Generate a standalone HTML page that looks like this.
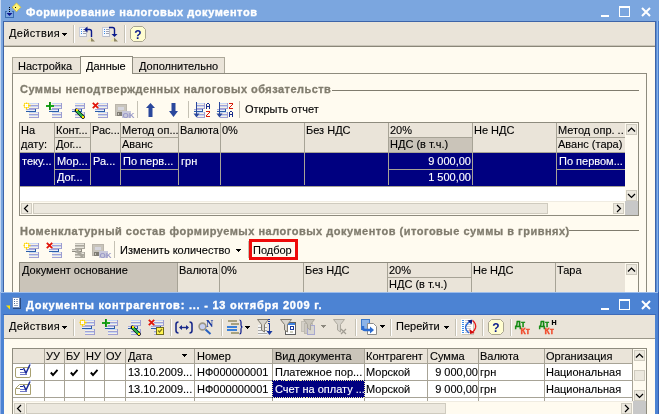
<!DOCTYPE html>
<html><head><meta charset="utf-8">
<style>
*{box-sizing:border-box}
html,body{margin:0;padding:0}
body{width:659px;height:414px;overflow:hidden;position:relative;background:#FFFBF0;font:11px "Liberation Sans",sans-serif;color:#000}
.a{position:absolute}
.t{position:absolute;white-space:nowrap;line-height:13px;will-change:transform;-webkit-text-stroke:0.12px}
svg{position:absolute;shape-rendering:crispEdges;overflow:visible;will-change:transform}
</style></head><body>

<div class="a" style="left:0px;top:0px;width:659px;height:292px;background:#7BA6DF"></div>
<div class="a" style="left:0px;top:0px;width:1px;height:292px;background:#C6D8F2"></div>
<div class="t" style="left:26px;top:5px;color:#fff;font-weight:bold;font-size:11px;line-height:14px;letter-spacing:0.53px;-webkit-text-stroke:0.35px #fff">Формирование налоговых документов</div>
<div class="a" style="left:601px;top:15px;width:8px;height:2px;background:#fff"></div>
<div class="a" style="left:619px;top:6px;width:11px;height:11px;border:1px solid #fff;border-top-width:2px"></div>
<svg style="left:641px;top:7px" width="10" height="10"><path d="M1 1L9 9M9 1L1 9" stroke="#fff" stroke-width="2" shape-rendering="geometricPrecision"/></svg>
<svg style="left:0px;top:0px" width="24" height="22">
<path d="M5.5 11V17.5H13.5V11M5.5 11.5H7M12 11.5H13.5" stroke="#3A6CB0" stroke-width="1" fill="none"/>
<path d="M6.5 13h6l-3 3z" fill="#0A1490" shape-rendering="geometricPrecision"/>
<rect x="9" y="7" width="1" height="1" fill="#000"/><rect x="9" y="9" width="1" height="1" fill="#000"/><rect x="9" y="11" width="1" height="1" fill="#000"/>
<rect x="12" y="7" width="1" height="1" fill="#000"/>
<path d="M16.5 3L20.8 7.3L16.5 11.6L12.2 7.3Z" fill="#FFF47A" stroke="#E0C020" stroke-width="0.8" shape-rendering="geometricPrecision"/>
<rect x="15" y="7" width="1" height="1" fill="#000"/>
</svg>
<div class="a" style="left:3px;top:21px;width:653px;height:271px;background:#3E64A8"></div>
<div class="a" style="left:656px;top:21px;width:1px;height:271px;background:#5C8ED6"></div>
<div class="a" style="left:657px;top:21px;width:1px;height:271px;background:#86B2EA"></div>
<div class="a" style="left:658px;top:21px;width:1px;height:271px;background:#4A7CC8"></div>
<div class="a" style="left:4px;top:22px;width:651px;height:24px;background:#EAE4D9"></div>
<div class="a" style="left:4px;top:45px;width:651px;height:1px;background:#C9C4B8"></div>
<div class="a" style="left:4px;top:46px;width:651px;height:1px;background:#8A8678"></div>
<div class="a" style="left:4px;top:47px;width:651px;height:245px;background:#FFFBF0"></div>
<div class="t" style="left:9px;top:27px;letter-spacing:0.35px">Действия</div>
<svg style="left:62px;top:33px" width="5" height="3"><path d="M0 0h5v1h-1v1h-1v1h-1v-1h-1v-1h-1z" fill="#000"/></svg>
<div class="a" style="left:73px;top:25px;width:1px;height:18px;background:#C5C1B4"></div>
<div class="a" style="left:74px;top:25px;width:1px;height:18px;background:#FFFFFF"></div>
<svg style="left:79px;top:26px" width="17" height="16" viewBox="0 0 17 16"><g transform="translate(0 1)"><rect x="0" y="0" width="8" height="10" fill="#F6F8FC"/><rect x="0" y="0" width="8" height="1" fill="#C8CCD8"/><rect x="0" y="9" width="8" height="1" fill="#B8BCC8"/><rect x="0" y="0" width="1" height="10" fill="#C8CCD8"/><rect x="7" y="0" width="1" height="10" fill="#B8BCC8"/><rect x="2" y="2" width="1" height="1" fill="#3C8CE8"/><rect x="2" y="4" width="1" height="1" fill="#3C8CE8"/><rect x="2" y="6" width="1" height="1" fill="#3C8CE8"/><rect x="4" y="2" width="3" height="1" fill="#9CA0B0"/><rect x="4" y="4" width="3" height="1" fill="#9CA0B0"/><rect x="4" y="6" width="3" height="1" fill="#9CA0B0"/></g><path d="M12.5 11V5.5Q12.5 3.5 10.5 3.5H7" stroke="#0A1A8C" stroke-width="1.4" fill="none" shape-rendering="geometricPrecision"/><path d="M5 3.5L8.5 0.5V6.5Z" fill="#0A1A8C" shape-rendering="geometricPrecision"/><path d="M8 15.5L12 11.5L12 15.5Z" fill="#ECE6B8" shape-rendering="geometricPrecision"/><path d="M12 11.5L16 15.5L12 15.5Z" fill="#8E8662" shape-rendering="geometricPrecision"/></svg>
<svg style="left:102px;top:26px" width="17" height="16" viewBox="0 0 17 16"><g transform="translate(0 1)"><rect x="0" y="0" width="8" height="10" fill="#F6F8FC"/><rect x="0" y="0" width="8" height="1" fill="#C8CCD8"/><rect x="0" y="9" width="8" height="1" fill="#B8BCC8"/><rect x="0" y="0" width="1" height="10" fill="#C8CCD8"/><rect x="7" y="0" width="1" height="10" fill="#B8BCC8"/><rect x="2" y="2" width="1" height="1" fill="#3C8CE8"/><rect x="2" y="4" width="1" height="1" fill="#3C8CE8"/><rect x="2" y="6" width="1" height="1" fill="#3C8CE8"/><rect x="4" y="2" width="3" height="1" fill="#9CA0B0"/><rect x="4" y="4" width="3" height="1" fill="#9CA0B0"/><rect x="4" y="6" width="3" height="1" fill="#9CA0B0"/></g><path d="M7 1.5H10.5Q12.5 1.5 12.5 3.5V8" stroke="#0A1A8C" stroke-width="1.4" fill="none" shape-rendering="geometricPrecision"/><path d="M9.5 8H15.5L12.5 11Z" fill="#0A1A8C" shape-rendering="geometricPrecision"/><path d="M8 15.5L12 11.5L12 15.5Z" fill="#ECE6B8" shape-rendering="geometricPrecision"/><path d="M12 11.5L16 15.5L12 15.5Z" fill="#8E8662" shape-rendering="geometricPrecision"/></svg>
<div class="a" style="left:124px;top:25px;width:1px;height:18px;background:#C5C1B4"></div>
<div class="a" style="left:125px;top:25px;width:1px;height:18px;background:#FFFFFF"></div>
<svg style="left:130px;top:26px" width="16" height="16" viewBox="0 0 16 16"><path d="M3.5 0.5H12.5L15.5 3.5V12.5L12.5 15.5H3.5L0.5 12.5V3.5Z" fill="#FFFDD0" stroke="#A9A590" shape-rendering="geometricPrecision"/><text x="8" y="12.6" text-anchor="middle" font-family="Liberation Sans" font-weight="bold" font-size="12" fill="#0A1A8C">?</text></svg>
<div class="a" style="left:12px;top:57px;width:69px;height:17px;background:#EAE4D9;border:1px solid #ACA899;border-bottom:none"></div>
<div class="t" style="left:18px;top:60px;">Настройка</div>
<div class="a" style="left:132px;top:57px;width:93px;height:17px;background:#EAE4D9;border:1px solid #ACA899;border-bottom:none"></div>
<div class="t" style="left:139px;top:60px;">Дополнительно</div>
<div class="a" style="left:12px;top:73px;width:635px;height:240px;border:1px solid #8E8B7E"></div>
<div class="a" style="left:80px;top:56px;width:53px;height:18px;background:#FFFBF0;border:1px solid #8E8B7E;border-bottom:none"></div>
<div class="t" style="left:86px;top:60px;">Данные</div>
<div class="t" style="left:20px;top:83px;font-weight:bold;color:#807C6E;letter-spacing:0.46px;-webkit-text-stroke:0.3px">Суммы неподтвержденных налоговых обязательств</div>
<div class="a" style="left:332px;top:90px;width:307px;height:1px;background:#807C6E"></div>
<svg style="left:23px;top:102px" width="16" height="16" viewBox="0 0 16 16"><rect x="6" y="1" width="10" height="1" fill="#C6D6F6"/><rect x="6" y="2" width="10" height="1" fill="#F6F0E4"/><rect x="6" y="3" width="10" height="1" fill="#A2A2D4"/><rect x="15" y="1" width="1" height="3" fill="#9C9CD0"/><rect x="6" y="4" width="10" height="1" fill="#C6D6F6"/><rect x="6" y="5" width="10" height="1" fill="#F6F0E4"/><rect x="6" y="6" width="10" height="1" fill="#A2A2D4"/><rect x="15" y="4" width="1" height="3" fill="#9C9CD0"/><rect x="3" y="7" width="10" height="1" fill="#A8A8DC"/><rect x="3" y="8" width="10" height="1" fill="#E8ECF8"/><rect x="3" y="9" width="10" height="1" fill="#2A5EA8"/><rect x="12" y="7" width="1" height="3" fill="#2A5EA8"/><rect x="6" y="10" width="10" height="1" fill="#C6D6F6"/><rect x="6" y="11" width="10" height="1" fill="#F6F0E4"/><rect x="6" y="12" width="10" height="1" fill="#A2A2D4"/><rect x="15" y="10" width="1" height="3" fill="#9C9CD0"/><rect x="6" y="13" width="10" height="1" fill="#C6D6F6"/><rect x="6" y="14" width="10" height="1" fill="#F6F0E4"/><rect x="6" y="15" width="10" height="1" fill="#A2A2D4"/><rect x="15" y="13" width="1" height="3" fill="#9C9CD0"/><path d="M3.5 0.5v7M0.5 3.5h7M1.3 1.3l4.4 4.4M5.7 1.3l-4.4 4.4" stroke="#FFD400" stroke-width="1.3" shape-rendering="geometricPrecision"/><rect x="2" y="2" width="3" height="3" fill="#FFFFFF"/><rect x="3" y="3" width="1" height="1" fill="#FFF8C0"/></svg>
<svg style="left:46px;top:102px" width="16" height="16" viewBox="0 0 16 16"><rect x="6" y="1" width="10" height="1" fill="#C6D6F6"/><rect x="6" y="2" width="10" height="1" fill="#F6F0E4"/><rect x="6" y="3" width="10" height="1" fill="#A2A2D4"/><rect x="15" y="1" width="1" height="3" fill="#9C9CD0"/><rect x="6" y="4" width="10" height="1" fill="#C6D6F6"/><rect x="6" y="5" width="10" height="1" fill="#F6F0E4"/><rect x="6" y="6" width="10" height="1" fill="#A2A2D4"/><rect x="15" y="4" width="1" height="3" fill="#9C9CD0"/><rect x="3" y="7" width="10" height="1" fill="#A8A8DC"/><rect x="3" y="8" width="10" height="1" fill="#E8ECF8"/><rect x="3" y="9" width="10" height="1" fill="#2A5EA8"/><rect x="12" y="7" width="1" height="3" fill="#2A5EA8"/><rect x="6" y="10" width="10" height="1" fill="#C6D6F6"/><rect x="6" y="11" width="10" height="1" fill="#F6F0E4"/><rect x="6" y="12" width="10" height="1" fill="#A2A2D4"/><rect x="15" y="10" width="1" height="3" fill="#9C9CD0"/><rect x="6" y="13" width="10" height="1" fill="#C6D6F6"/><rect x="6" y="14" width="10" height="1" fill="#F6F0E4"/><rect x="6" y="15" width="10" height="1" fill="#A2A2D4"/><rect x="15" y="13" width="1" height="3" fill="#9C9CD0"/><rect x="3" y="0" width="2" height="8" fill="#1CA51C"/><rect x="0" y="3" width="8" height="2" fill="#1CA51C"/><rect x="3" y="0" width="1" height="8" fill="#0E8A0E"/></svg>
<svg style="left:69px;top:102px" width="16" height="16" viewBox="0 0 16 16"><rect x="6" y="1" width="10" height="1" fill="#C6D6F6"/><rect x="6" y="2" width="10" height="1" fill="#F6F0E4"/><rect x="6" y="3" width="10" height="1" fill="#A2A2D4"/><rect x="15" y="1" width="1" height="3" fill="#9C9CD0"/><rect x="6" y="4" width="10" height="1" fill="#C6D6F6"/><rect x="6" y="5" width="10" height="1" fill="#F6F0E4"/><rect x="6" y="6" width="10" height="1" fill="#A2A2D4"/><rect x="15" y="4" width="1" height="3" fill="#9C9CD0"/><rect x="3" y="7" width="10" height="1" fill="#A8A8DC"/><rect x="3" y="8" width="10" height="1" fill="#E8ECF8"/><rect x="3" y="9" width="10" height="1" fill="#2A5EA8"/><rect x="12" y="7" width="1" height="3" fill="#2A5EA8"/><rect x="6" y="10" width="10" height="1" fill="#C6D6F6"/><rect x="6" y="11" width="10" height="1" fill="#F6F0E4"/><rect x="6" y="12" width="10" height="1" fill="#A2A2D4"/><rect x="15" y="10" width="1" height="3" fill="#9C9CD0"/><rect x="6" y="13" width="10" height="1" fill="#C6D6F6"/><rect x="6" y="14" width="10" height="1" fill="#F6F0E4"/><rect x="6" y="15" width="10" height="1" fill="#A2A2D4"/><rect x="15" y="13" width="1" height="3" fill="#9C9CD0"/><path d="M7.5 8.5L14 15" stroke="#000" stroke-width="3.6" stroke-linecap="round" shape-rendering="geometricPrecision"/><path d="M7.5 8.5L14 15" stroke="#2DB84A" stroke-width="2.4" shape-rendering="geometricPrecision"/><rect x="6.5" y="6.5" width="2" height="2" fill="#FFE400"/><rect x="13" y="14" width="2" height="2" fill="#FFE400"/></svg>
<svg style="left:92px;top:102px" width="16" height="16" viewBox="0 0 16 16"><rect x="6" y="1" width="10" height="1" fill="#C6D6F6"/><rect x="6" y="2" width="10" height="1" fill="#F6F0E4"/><rect x="6" y="3" width="10" height="1" fill="#A2A2D4"/><rect x="15" y="1" width="1" height="3" fill="#9C9CD0"/><rect x="6" y="4" width="10" height="1" fill="#C6D6F6"/><rect x="6" y="5" width="10" height="1" fill="#F6F0E4"/><rect x="6" y="6" width="10" height="1" fill="#A2A2D4"/><rect x="15" y="4" width="1" height="3" fill="#9C9CD0"/><rect x="3" y="7" width="10" height="1" fill="#A8A8DC"/><rect x="3" y="8" width="10" height="1" fill="#E8ECF8"/><rect x="3" y="9" width="10" height="1" fill="#2A5EA8"/><rect x="12" y="7" width="1" height="3" fill="#2A5EA8"/><rect x="6" y="10" width="10" height="1" fill="#C6D6F6"/><rect x="6" y="11" width="10" height="1" fill="#F6F0E4"/><rect x="6" y="12" width="10" height="1" fill="#A2A2D4"/><rect x="15" y="10" width="1" height="3" fill="#9C9CD0"/><rect x="6" y="13" width="10" height="1" fill="#C6D6F6"/><rect x="6" y="14" width="10" height="1" fill="#F6F0E4"/><rect x="6" y="15" width="10" height="1" fill="#A2A2D4"/><rect x="15" y="13" width="1" height="3" fill="#9C9CD0"/><path d="M0.8 0.8L6.2 6.2M6.2 0.8L0.8 6.2" stroke="#E0140A" stroke-width="1.8" shape-rendering="geometricPrecision"/></svg>
<svg style="left:115px;top:102px" width="16" height="16" viewBox="0 0 16 16"><rect x="0" y="2" width="12" height="12" fill="#BAB5AB"/><rect x="1" y="3" width="10" height="10" fill="#C9C5BC"/><rect x="3" y="5" width="6" height="3" fill="#D6D6DE"/><rect x="2" y="10" width="5" height="4" fill="#807D74"/><rect x="3" y="11" width="1" height="2" fill="#C9C5BC"/><rect x="7" y="9" width="9" height="7" fill="#C8C8DA"/><text x="7.5" y="15.5" font-family="Liberation Sans" font-size="8" fill="#9A9AC8" font-weight="bold">OK</text></svg>
<div class="a" style="left:137px;top:101px;width:1px;height:17px;background:#C5C1B4"></div>
<svg style="left:146px;top:103px" width="10" height="14" viewBox="0 0 10 14"><path d="M4.5 0L9 5H6.5V14H2.5V5H0Z" fill="#2A479C" shape-rendering="geometricPrecision"/></svg>
<svg style="left:169px;top:103px" width="10" height="14" viewBox="0 0 10 14"><path d="M2.5 0H6.5V8H9L4.5 14L0 8H2.5Z" fill="#2A479C" shape-rendering="geometricPrecision"/></svg>
<div class="a" style="left:188px;top:101px;width:1px;height:17px;background:#C5C1B4"></div>
<svg style="left:193px;top:102px" width="18" height="16" viewBox="0 0 18 16"><rect x="4" y="1" width="8" height="1" fill="#C6D6F6"/><rect x="4" y="2" width="8" height="1" fill="#F6F0E4"/><rect x="4" y="3" width="8" height="1" fill="#A2A2D4"/><rect x="11" y="1" width="1" height="3" fill="#9C9CD0"/><rect x="4" y="4" width="8" height="1" fill="#C6D6F6"/><rect x="4" y="5" width="8" height="1" fill="#F6F0E4"/><rect x="4" y="6" width="8" height="1" fill="#A2A2D4"/><rect x="11" y="4" width="1" height="3" fill="#9C9CD0"/><rect x="1" y="7" width="9" height="1" fill="#A8A8DC"/><rect x="1" y="8" width="9" height="1" fill="#E8ECF8"/><rect x="1" y="9" width="9" height="1" fill="#2A5EA8"/><rect x="9" y="7" width="1" height="3" fill="#2A5EA8"/><rect x="4" y="10" width="8" height="1" fill="#C6D6F6"/><rect x="4" y="11" width="8" height="1" fill="#F6F0E4"/><rect x="4" y="12" width="8" height="1" fill="#A2A2D4"/><rect x="11" y="10" width="1" height="3" fill="#9C9CD0"/><rect x="4" y="13" width="8" height="1" fill="#C6D6F6"/><rect x="4" y="14" width="8" height="1" fill="#F6F0E4"/><rect x="4" y="15" width="8" height="1" fill="#A2A2D4"/><rect x="11" y="13" width="1" height="3" fill="#9C9CD0"/><rect x="3" y="0" width="1" height="14" fill="#2A479C"/><path d="M0.5 11.5h6L3.5 15.5z" fill="#2A479C" shape-rendering="geometricPrecision"/><rect x="13" y="2" width="1" height="5" fill="#1A2E8C"/><rect x="16" y="2" width="1" height="5" fill="#1A2E8C"/><rect x="14" y="1" width="2" height="1" fill="#1A2E8C"/><rect x="14" y="4" width="2" height="1" fill="#1A2E8C"/><rect x="13" y="9" width="4" height="1" fill="#D81A0A"/><rect x="13" y="14" width="4" height="1" fill="#D81A0A"/><rect x="16" y="10" width="1" height="1" fill="#D81A0A"/><rect x="15" y="11" width="1" height="1" fill="#D81A0A"/><rect x="14" y="12" width="1" height="1" fill="#D81A0A"/><rect x="13" y="13" width="1" height="1" fill="#D81A0A"/></svg>
<svg style="left:216px;top:102px" width="18" height="16" viewBox="0 0 18 16"><rect x="4" y="1" width="8" height="1" fill="#C6D6F6"/><rect x="4" y="2" width="8" height="1" fill="#F6F0E4"/><rect x="4" y="3" width="8" height="1" fill="#A2A2D4"/><rect x="11" y="1" width="1" height="3" fill="#9C9CD0"/><rect x="4" y="4" width="8" height="1" fill="#C6D6F6"/><rect x="4" y="5" width="8" height="1" fill="#F6F0E4"/><rect x="4" y="6" width="8" height="1" fill="#A2A2D4"/><rect x="11" y="4" width="1" height="3" fill="#9C9CD0"/><rect x="1" y="7" width="9" height="1" fill="#A8A8DC"/><rect x="1" y="8" width="9" height="1" fill="#E8ECF8"/><rect x="1" y="9" width="9" height="1" fill="#2A5EA8"/><rect x="9" y="7" width="1" height="3" fill="#2A5EA8"/><rect x="4" y="10" width="8" height="1" fill="#C6D6F6"/><rect x="4" y="11" width="8" height="1" fill="#F6F0E4"/><rect x="4" y="12" width="8" height="1" fill="#A2A2D4"/><rect x="11" y="10" width="1" height="3" fill="#9C9CD0"/><rect x="4" y="13" width="8" height="1" fill="#C6D6F6"/><rect x="4" y="14" width="8" height="1" fill="#F6F0E4"/><rect x="4" y="15" width="8" height="1" fill="#A2A2D4"/><rect x="11" y="13" width="1" height="3" fill="#9C9CD0"/><rect x="3" y="0" width="1" height="14" fill="#2A479C"/><path d="M0.5 11.5h6L3.5 15.5z" fill="#2A479C" shape-rendering="geometricPrecision"/><rect x="13" y="1" width="4" height="1" fill="#D81A0A"/><rect x="13" y="6" width="4" height="1" fill="#D81A0A"/><rect x="16" y="2" width="1" height="1" fill="#D81A0A"/><rect x="15" y="3" width="1" height="1" fill="#D81A0A"/><rect x="14" y="4" width="1" height="1" fill="#D81A0A"/><rect x="13" y="5" width="1" height="1" fill="#D81A0A"/><rect x="13" y="10" width="1" height="5" fill="#1A2E8C"/><rect x="16" y="10" width="1" height="5" fill="#1A2E8C"/><rect x="14" y="9" width="2" height="1" fill="#1A2E8C"/><rect x="14" y="12" width="2" height="1" fill="#1A2E8C"/></svg>
<div class="a" style="left:239px;top:101px;width:1px;height:17px;background:#C5C1B4"></div>
<div class="t" style="left:245px;top:103px;">Открыть отчет</div>
<div class="a" style="left:19px;top:122px;width:620px;height:94px;border:1px solid #8E8B7E;background:#fff"></div>
<div class="a" style="left:20px;top:123px;width:605px;height:30px;background:#EAE4D9"></div>
<div class="a" style="left:389px;top:138px;width:83px;height:15px;background:#CAC4B9"></div>
<div class="a" style="left:54px;top:123px;width:1px;height:62px;background:#A7A396"></div>
<div class="a" style="left:90px;top:123px;width:1px;height:62px;background:#A7A396"></div>
<div class="a" style="left:120px;top:123px;width:1px;height:62px;background:#A7A396"></div>
<div class="a" style="left:178px;top:123px;width:1px;height:62px;background:#A7A396"></div>
<div class="a" style="left:220px;top:123px;width:1px;height:62px;background:#A7A396"></div>
<div class="a" style="left:304px;top:123px;width:1px;height:62px;background:#A7A396"></div>
<div class="a" style="left:388px;top:123px;width:1px;height:62px;background:#A7A396"></div>
<div class="a" style="left:472px;top:123px;width:1px;height:62px;background:#A7A396"></div>
<div class="a" style="left:556px;top:123px;width:1px;height:62px;background:#A7A396"></div>
<div class="a" style="left:20px;top:152px;width:605px;height:1px;background:#A7A396"></div>
<div class="a" style="left:55px;top:137px;width:35px;height:1px;background:#A7A396"></div>
<div class="a" style="left:121px;top:137px;width:57px;height:1px;background:#A7A396"></div>
<div class="a" style="left:389px;top:137px;width:83px;height:1px;background:#A7A396"></div>
<div class="a" style="left:557px;top:137px;width:68px;height:1px;background:#A7A396"></div>
<div class="t" style="left:21px;top:124px;">На</div>
<div class="t" style="left:21px;top:138px;">дату:</div>
<div class="t" style="left:56px;top:124px;">Конт...</div>
<div class="t" style="left:56px;top:138px;">Дог...</div>
<div class="t" style="left:92px;top:124px;">Рас...</div>
<div class="t" style="left:122px;top:124px;">Метод оп...</div>
<div class="t" style="left:122px;top:138px;">Аванс</div>
<div class="t" style="left:180px;top:124px;">Валюта</div>
<div class="t" style="left:222px;top:124px;">0%</div>
<div class="t" style="left:306px;top:124px;">Без НДС</div>
<div class="t" style="left:390px;top:124px;">20%</div>
<div class="t" style="left:390px;top:138px;">НДС (в т.ч.)</div>
<div class="t" style="left:474px;top:124px;">Не НДС</div>
<div class="t" style="left:558px;top:124px;">Метод опр. ..</div>
<div class="t" style="left:558px;top:138px;">Аванс (тара)</div>
<div class="a" style="left:20px;top:153px;width:605px;height:33px;background:#000080"></div>
<div class="a" style="left:20px;top:186px;width:605px;height:1px;background:#A7A396"></div>
<div class="a" style="left:54px;top:153px;width:1px;height:32px;background:#A7A396"></div>
<div class="a" style="left:90px;top:153px;width:1px;height:32px;background:#A7A396"></div>
<div class="a" style="left:120px;top:153px;width:1px;height:32px;background:#A7A396"></div>
<div class="a" style="left:178px;top:153px;width:1px;height:32px;background:#A7A396"></div>
<div class="a" style="left:220px;top:153px;width:1px;height:32px;background:#A7A396"></div>
<div class="a" style="left:304px;top:153px;width:1px;height:32px;background:#A7A396"></div>
<div class="a" style="left:388px;top:153px;width:1px;height:32px;background:#A7A396"></div>
<div class="a" style="left:472px;top:153px;width:1px;height:32px;background:#A7A396"></div>
<div class="a" style="left:556px;top:153px;width:1px;height:32px;background:#A7A396"></div>
<div class="a" style="left:55px;top:169px;width:35px;height:1px;background:#A7A396"></div>
<div class="a" style="left:121px;top:169px;width:57px;height:1px;background:#A7A396"></div>
<div class="a" style="left:389px;top:169px;width:83px;height:1px;background:#A7A396"></div>
<div class="a" style="left:557px;top:169px;width:68px;height:1px;background:#A7A396"></div>
<div class="t" style="left:22px;top:155px;color:#fff">теку...</div>
<div class="t" style="left:57px;top:155px;color:#fff">Мор...</div>
<div class="t" style="left:57px;top:171px;color:#fff">Дог...</div>
<div class="t" style="left:93px;top:155px;color:#fff">Ра...</div>
<div class="t" style="left:123px;top:155px;color:#fff">По перв...</div>
<div class="t" style="left:181px;top:155px;color:#fff">грн</div>
<div class="t" style="left:389px;top:155px;width:82px;text-align:right;color:#fff">9 000,00</div>
<div class="t" style="left:389px;top:171px;width:82px;text-align:right;color:#fff">1 500,00</div>
<div class="t" style="left:559px;top:155px;color:#fff">По первом...</div>
<div class="a" style="left:625px;top:123px;width:13px;height:78px;background:#FFFBF0"></div>
<div class="a" style="left:626px;top:124px;width:11px;height:11px;background:#ECE8DE;border:1px solid #CFCBBF"></div>
<svg style="left:0;top:0" width="1" height="1"><path d="M628.0 131.5L631.5 128.0L635.0 131.5" stroke="#000" stroke-width="1.2" fill="none" shape-rendering="geometricPrecision"/></svg>
<div class="a" style="left:626px;top:190px;width:11px;height:11px;background:#ECE8DE;border:1px solid #CFCBBF"></div>
<svg style="left:0;top:0" width="1" height="1"><path d="M628.0 194.0L631.5 197.5L635.0 194.0" stroke="#000" stroke-width="1.2" fill="none" shape-rendering="geometricPrecision"/></svg>
<div class="a" style="left:20px;top:201px;width:605px;height:14px;background:#FFFBF0"></div>
<div class="a" style="left:20px;top:201px;width:605px;height:1px;background:#F0ECE2"></div>
<div class="a" style="left:21px;top:203px;width:11px;height:11px;background:#ECE8DE;border:1px solid #CFCBBF"></div>
<svg style="left:0;top:0" width="1" height="1"><path d="M28.0 205.0L24.5 208.5L28.0 212.0" stroke="#000" stroke-width="1.2" fill="none" shape-rendering="geometricPrecision"/></svg>
<div class="a" style="left:33px;top:203px;width:515px;height:11px;background:#ECE8DE;border:1px solid #CFCBBF"></div>
<div class="a" style="left:613px;top:203px;width:11px;height:11px;background:#ECE8DE;border:1px solid #CFCBBF"></div>
<svg style="left:0;top:0" width="1" height="1"><path d="M617.0 205.0L620.5 208.5L617.0 212.0" stroke="#000" stroke-width="1.2" fill="none" shape-rendering="geometricPrecision"/></svg>
<div class="a" style="left:625px;top:201px;width:13px;height:14px;background:#C8C8C8"></div>
<div class="t" style="left:20px;top:225px;font-weight:bold;color:#807C6E;letter-spacing:0.5px;-webkit-text-stroke:0.3px">Номенклатурный состав формируемых налоговых документов (итоговые суммы в гривнях)</div>
<div class="a" style="left:569px;top:230px;width:70px;height:1px;background:#807C6E"></div>
<svg style="left:23px;top:242px" width="16" height="16" viewBox="0 0 16 16"><rect x="6" y="1" width="10" height="1" fill="#C6D6F6"/><rect x="6" y="2" width="10" height="1" fill="#F6F0E4"/><rect x="6" y="3" width="10" height="1" fill="#A2A2D4"/><rect x="15" y="1" width="1" height="3" fill="#9C9CD0"/><rect x="6" y="4" width="10" height="1" fill="#C6D6F6"/><rect x="6" y="5" width="10" height="1" fill="#F6F0E4"/><rect x="6" y="6" width="10" height="1" fill="#A2A2D4"/><rect x="15" y="4" width="1" height="3" fill="#9C9CD0"/><rect x="3" y="7" width="10" height="1" fill="#A8A8DC"/><rect x="3" y="8" width="10" height="1" fill="#E8ECF8"/><rect x="3" y="9" width="10" height="1" fill="#2A5EA8"/><rect x="12" y="7" width="1" height="3" fill="#2A5EA8"/><rect x="6" y="10" width="10" height="1" fill="#C6D6F6"/><rect x="6" y="11" width="10" height="1" fill="#F6F0E4"/><rect x="6" y="12" width="10" height="1" fill="#A2A2D4"/><rect x="15" y="10" width="1" height="3" fill="#9C9CD0"/><rect x="6" y="13" width="10" height="1" fill="#C6D6F6"/><rect x="6" y="14" width="10" height="1" fill="#F6F0E4"/><rect x="6" y="15" width="10" height="1" fill="#A2A2D4"/><rect x="15" y="13" width="1" height="3" fill="#9C9CD0"/><path d="M3.5 0.5v7M0.5 3.5h7M1.3 1.3l4.4 4.4M5.7 1.3l-4.4 4.4" stroke="#FFD400" stroke-width="1.3" shape-rendering="geometricPrecision"/><rect x="2" y="2" width="3" height="3" fill="#FFFFFF"/><rect x="3" y="3" width="1" height="1" fill="#FFF8C0"/></svg>
<svg style="left:46px;top:242px" width="16" height="16" viewBox="0 0 16 16"><rect x="6" y="1" width="10" height="1" fill="#C6D6F6"/><rect x="6" y="2" width="10" height="1" fill="#F6F0E4"/><rect x="6" y="3" width="10" height="1" fill="#A2A2D4"/><rect x="15" y="1" width="1" height="3" fill="#9C9CD0"/><rect x="6" y="4" width="10" height="1" fill="#C6D6F6"/><rect x="6" y="5" width="10" height="1" fill="#F6F0E4"/><rect x="6" y="6" width="10" height="1" fill="#A2A2D4"/><rect x="15" y="4" width="1" height="3" fill="#9C9CD0"/><rect x="3" y="7" width="10" height="1" fill="#A8A8DC"/><rect x="3" y="8" width="10" height="1" fill="#E8ECF8"/><rect x="3" y="9" width="10" height="1" fill="#2A5EA8"/><rect x="12" y="7" width="1" height="3" fill="#2A5EA8"/><rect x="6" y="10" width="10" height="1" fill="#C6D6F6"/><rect x="6" y="11" width="10" height="1" fill="#F6F0E4"/><rect x="6" y="12" width="10" height="1" fill="#A2A2D4"/><rect x="15" y="10" width="1" height="3" fill="#9C9CD0"/><rect x="6" y="13" width="10" height="1" fill="#C6D6F6"/><rect x="6" y="14" width="10" height="1" fill="#F6F0E4"/><rect x="6" y="15" width="10" height="1" fill="#A2A2D4"/><rect x="15" y="13" width="1" height="3" fill="#9C9CD0"/><path d="M0.8 0.8L6.2 6.2M6.2 0.8L0.8 6.2" stroke="#E0140A" stroke-width="1.8" shape-rendering="geometricPrecision"/></svg>
<svg style="left:69px;top:242px" width="16" height="16" viewBox="0 0 16 16"><rect x="6" y="1" width="10" height="1" fill="#C4C1B8"/><rect x="6" y="2" width="10" height="1" fill="#E8E5DC"/><rect x="6" y="3" width="10" height="1" fill="#A9A69C"/><rect x="15" y="1" width="1" height="3" fill="#A9A69C"/><rect x="6" y="4" width="10" height="1" fill="#C4C1B8"/><rect x="6" y="5" width="10" height="1" fill="#E8E5DC"/><rect x="6" y="6" width="10" height="1" fill="#A9A69C"/><rect x="15" y="4" width="1" height="3" fill="#A9A69C"/><rect x="3" y="7" width="10" height="1" fill="#B4B1A8"/><rect x="3" y="8" width="10" height="1" fill="#E0DDD4"/><rect x="3" y="9" width="10" height="1" fill="#8F8C82"/><rect x="12" y="7" width="1" height="3" fill="#8F8C82"/><rect x="6" y="10" width="10" height="1" fill="#C4C1B8"/><rect x="6" y="11" width="10" height="1" fill="#E8E5DC"/><rect x="6" y="12" width="10" height="1" fill="#A9A69C"/><rect x="15" y="10" width="1" height="3" fill="#A9A69C"/><rect x="6" y="13" width="10" height="1" fill="#C4C1B8"/><rect x="6" y="14" width="10" height="1" fill="#E8E5DC"/><rect x="6" y="15" width="10" height="1" fill="#A9A69C"/><rect x="15" y="13" width="1" height="3" fill="#A9A69C"/><path d="M7.5 8.5L14 15" stroke="#A9A69C" stroke-width="3" shape-rendering="geometricPrecision"/></svg>
<svg style="left:92px;top:242px" width="16" height="16" viewBox="0 0 16 16"><rect x="0" y="2" width="12" height="12" fill="#BAB5AB"/><rect x="1" y="3" width="10" height="10" fill="#C9C5BC"/><rect x="3" y="5" width="6" height="3" fill="#D6D6DE"/><rect x="2" y="10" width="5" height="4" fill="#807D74"/><rect x="3" y="11" width="1" height="2" fill="#C9C5BC"/><rect x="7" y="9" width="9" height="7" fill="#C8C8DA"/><text x="7.5" y="15.5" font-family="Liberation Sans" font-size="8" fill="#9A9AC8" font-weight="bold">OK</text></svg>
<div class="a" style="left:114px;top:241px;width:1px;height:17px;background:#C5C1B4"></div>
<div class="t" style="left:120px;top:244px;">Изменить количество</div>
<svg style="left:236px;top:249px" width="5" height="3"><path d="M0 0h5v1h-1v1h-1v1h-1v-1h-1v-1h-1z" fill="#000"/></svg>
<div class="a" style="left:248px;top:241px;width:1px;height:17px;background:#C5C1B4"></div>
<div class="a" style="left:249px;top:239px;width:49px;height:21px;border:3px solid #EE0A0A"></div>
<div class="t" style="left:253px;top:244px;">Подбор</div>
<div class="a" style="left:19px;top:262px;width:620px;height:60px;border:1px solid #8E8B7E;background:#fff"></div>
<div class="a" style="left:20px;top:263px;width:605px;height:40px;background:#EAE4D9"></div>
<div class="a" style="left:20px;top:263px;width:157px;height:40px;background:#CAC4B9"></div>
<div class="a" style="left:177px;top:263px;width:1px;height:37px;background:#A7A396"></div>
<div class="a" style="left:219px;top:263px;width:1px;height:37px;background:#A7A396"></div>
<div class="a" style="left:303px;top:263px;width:1px;height:37px;background:#A7A396"></div>
<div class="a" style="left:387px;top:263px;width:1px;height:37px;background:#A7A396"></div>
<div class="a" style="left:471px;top:263px;width:1px;height:37px;background:#A7A396"></div>
<div class="a" style="left:555px;top:263px;width:1px;height:37px;background:#A7A396"></div>
<div class="a" style="left:388px;top:277px;width:83px;height:1px;background:#A7A396"></div>
<div class="t" style="left:22px;top:264px;">Документ основание</div>
<div class="t" style="left:179px;top:264px;">Валюта</div>
<div class="t" style="left:221px;top:264px;">0%</div>
<div class="t" style="left:305px;top:264px;">Без НДС</div>
<div class="t" style="left:389px;top:264px;">20%</div>
<div class="t" style="left:389px;top:278px;">НДС (в т.ч.)</div>
<div class="t" style="left:473px;top:264px;">Не НДС</div>
<div class="t" style="left:557px;top:264px;">Тара</div>
<div class="a" style="left:625px;top:263px;width:13px;height:40px;background:#FFFBF0"></div>
<div class="a" style="left:626px;top:264px;width:11px;height:11px;background:#ECE8DE;border:1px solid #CFCBBF"></div>
<svg style="left:0;top:0" width="1" height="1"><path d="M628.0 271.5L631.5 268.0L635.0 271.5" stroke="#000" stroke-width="1.2" fill="none" shape-rendering="geometricPrecision"/></svg>
<div class="a" style="left:0px;top:292px;width:659px;height:122px;background:#4C83D3"></div>
<div class="a" style="left:0px;top:292px;width:659px;height:1px;background:#9DBDEB"></div>
<div class="a" style="left:0px;top:292px;width:1px;height:122px;background:#8FB0E8"></div>
<svg style="left:0px;top:292px" width="24" height="22">
<path d="M6 13.5h4v4z" fill="#FFE400" shape-rendering="geometricPrecision"/>
<rect x="12.5" y="5.5" width="7" height="10" fill="#FFFFFF" stroke="#6C8CC0"/>
<rect x="14" y="7" width="1" height="1" fill="#5070A0"/><rect x="16" y="7" width="2" height="1" fill="#9CA8C0"/>
<rect x="14" y="9" width="1" height="1" fill="#5070A0"/><rect x="16" y="9" width="2" height="1" fill="#9CA8C0"/>
<rect x="14" y="11" width="1" height="1" fill="#5070A0"/><rect x="16" y="11" width="2" height="1" fill="#9CA8C0"/>
<rect x="14" y="13" width="4" height="1" fill="#9CA8C0"/>
<rect x="20" y="6" width="1" height="10" fill="#2A4A80"/><rect x="13" y="16" width="8" height="1" fill="#2A4A80"/>
</svg>
<div class="t" style="left:26px;top:298px;color:#fff;font-weight:bold;font-size:11px;line-height:14px;letter-spacing:0.76px;-webkit-text-stroke:0.35px #fff">Документы контрагентов: ... - 13 октября 2009 г.</div>
<div class="a" style="left:601px;top:308px;width:8px;height:2px;background:#fff"></div>
<div class="a" style="left:619px;top:299px;width:11px;height:11px;border:1px solid #fff;border-top-width:2px"></div>
<svg style="left:641px;top:300px" width="10" height="10"><path d="M1 1L9 9M9 1L1 9" stroke="#fff" stroke-width="2" shape-rendering="geometricPrecision"/></svg>
<div class="a" style="left:3px;top:314px;width:653px;height:100px;background:#4C83D3"></div>
<div class="a" style="left:3px;top:314px;width:653px;height:1px;background:#3E6AB8"></div>
<div class="a" style="left:4px;top:315px;width:651px;height:24px;background:#EAE4D9"></div>
<div class="a" style="left:4px;top:338px;width:651px;height:1px;background:#9B978A"></div>
<div class="a" style="left:4px;top:339px;width:651px;height:75px;background:#FFFBF0"></div>
<div class="t" style="left:9px;top:320px;letter-spacing:0.35px">Действия</div>
<svg style="left:62px;top:326px" width="5" height="3"><path d="M0 0h5v1h-1v1h-1v1h-1v-1h-1v-1h-1z" fill="#000"/></svg>
<div class="a" style="left:73px;top:319px;width:1px;height:17px;background:#C5C1B4"></div>
<div class="a" style="left:74px;top:319px;width:1px;height:17px;background:#FFFFFF"></div>
<svg style="left:79px;top:319px" width="16" height="16" viewBox="0 0 16 16"><rect x="6" y="1" width="10" height="1" fill="#C6D6F6"/><rect x="6" y="2" width="10" height="1" fill="#F6F0E4"/><rect x="6" y="3" width="10" height="1" fill="#A2A2D4"/><rect x="15" y="1" width="1" height="3" fill="#9C9CD0"/><rect x="6" y="4" width="10" height="1" fill="#C6D6F6"/><rect x="6" y="5" width="10" height="1" fill="#F6F0E4"/><rect x="6" y="6" width="10" height="1" fill="#A2A2D4"/><rect x="15" y="4" width="1" height="3" fill="#9C9CD0"/><rect x="3" y="7" width="10" height="1" fill="#A8A8DC"/><rect x="3" y="8" width="10" height="1" fill="#E8ECF8"/><rect x="3" y="9" width="10" height="1" fill="#2A5EA8"/><rect x="12" y="7" width="1" height="3" fill="#2A5EA8"/><rect x="6" y="10" width="10" height="1" fill="#C6D6F6"/><rect x="6" y="11" width="10" height="1" fill="#F6F0E4"/><rect x="6" y="12" width="10" height="1" fill="#A2A2D4"/><rect x="15" y="10" width="1" height="3" fill="#9C9CD0"/><rect x="6" y="13" width="10" height="1" fill="#C6D6F6"/><rect x="6" y="14" width="10" height="1" fill="#F6F0E4"/><rect x="6" y="15" width="10" height="1" fill="#A2A2D4"/><rect x="15" y="13" width="1" height="3" fill="#9C9CD0"/><path d="M3.5 0.5v7M0.5 3.5h7M1.3 1.3l4.4 4.4M5.7 1.3l-4.4 4.4" stroke="#FFD400" stroke-width="1.3" shape-rendering="geometricPrecision"/><rect x="2" y="2" width="3" height="3" fill="#FFFFFF"/><rect x="3" y="3" width="1" height="1" fill="#FFF8C0"/></svg>
<svg style="left:102px;top:319px" width="16" height="16" viewBox="0 0 16 16"><rect x="6" y="1" width="10" height="1" fill="#C6D6F6"/><rect x="6" y="2" width="10" height="1" fill="#F6F0E4"/><rect x="6" y="3" width="10" height="1" fill="#A2A2D4"/><rect x="15" y="1" width="1" height="3" fill="#9C9CD0"/><rect x="6" y="4" width="10" height="1" fill="#C6D6F6"/><rect x="6" y="5" width="10" height="1" fill="#F6F0E4"/><rect x="6" y="6" width="10" height="1" fill="#A2A2D4"/><rect x="15" y="4" width="1" height="3" fill="#9C9CD0"/><rect x="3" y="7" width="10" height="1" fill="#A8A8DC"/><rect x="3" y="8" width="10" height="1" fill="#E8ECF8"/><rect x="3" y="9" width="10" height="1" fill="#2A5EA8"/><rect x="12" y="7" width="1" height="3" fill="#2A5EA8"/><rect x="6" y="10" width="10" height="1" fill="#C6D6F6"/><rect x="6" y="11" width="10" height="1" fill="#F6F0E4"/><rect x="6" y="12" width="10" height="1" fill="#A2A2D4"/><rect x="15" y="10" width="1" height="3" fill="#9C9CD0"/><rect x="6" y="13" width="10" height="1" fill="#C6D6F6"/><rect x="6" y="14" width="10" height="1" fill="#F6F0E4"/><rect x="6" y="15" width="10" height="1" fill="#A2A2D4"/><rect x="15" y="13" width="1" height="3" fill="#9C9CD0"/><rect x="3" y="0" width="2" height="8" fill="#1CA51C"/><rect x="0" y="3" width="8" height="2" fill="#1CA51C"/><rect x="3" y="0" width="1" height="8" fill="#0E8A0E"/></svg>
<svg style="left:125px;top:319px" width="16" height="16" viewBox="0 0 16 16"><rect x="6" y="1" width="10" height="1" fill="#C6D6F6"/><rect x="6" y="2" width="10" height="1" fill="#F6F0E4"/><rect x="6" y="3" width="10" height="1" fill="#A2A2D4"/><rect x="15" y="1" width="1" height="3" fill="#9C9CD0"/><rect x="6" y="4" width="10" height="1" fill="#C6D6F6"/><rect x="6" y="5" width="10" height="1" fill="#F6F0E4"/><rect x="6" y="6" width="10" height="1" fill="#A2A2D4"/><rect x="15" y="4" width="1" height="3" fill="#9C9CD0"/><rect x="3" y="7" width="10" height="1" fill="#A8A8DC"/><rect x="3" y="8" width="10" height="1" fill="#E8ECF8"/><rect x="3" y="9" width="10" height="1" fill="#2A5EA8"/><rect x="12" y="7" width="1" height="3" fill="#2A5EA8"/><rect x="6" y="10" width="10" height="1" fill="#C6D6F6"/><rect x="6" y="11" width="10" height="1" fill="#F6F0E4"/><rect x="6" y="12" width="10" height="1" fill="#A2A2D4"/><rect x="15" y="10" width="1" height="3" fill="#9C9CD0"/><rect x="6" y="13" width="10" height="1" fill="#C6D6F6"/><rect x="6" y="14" width="10" height="1" fill="#F6F0E4"/><rect x="6" y="15" width="10" height="1" fill="#A2A2D4"/><rect x="15" y="13" width="1" height="3" fill="#9C9CD0"/><path d="M7.5 8.5L14 15" stroke="#000" stroke-width="3.6" stroke-linecap="round" shape-rendering="geometricPrecision"/><path d="M7.5 8.5L14 15" stroke="#2DB84A" stroke-width="2.4" shape-rendering="geometricPrecision"/><rect x="6.5" y="6.5" width="2" height="2" fill="#FFE400"/><rect x="13" y="14" width="2" height="2" fill="#FFE400"/></svg>
<svg style="left:148px;top:319px" width="16" height="16" viewBox="0 0 16 16"><rect x="6" y="1" width="10" height="1" fill="#C6D6F6"/><rect x="6" y="2" width="10" height="1" fill="#F6F0E4"/><rect x="6" y="3" width="10" height="1" fill="#A2A2D4"/><rect x="15" y="1" width="1" height="3" fill="#9C9CD0"/><rect x="6" y="4" width="10" height="1" fill="#C6D6F6"/><rect x="6" y="5" width="10" height="1" fill="#F6F0E4"/><rect x="6" y="6" width="10" height="1" fill="#A2A2D4"/><rect x="15" y="4" width="1" height="3" fill="#9C9CD0"/><rect x="3" y="7" width="10" height="1" fill="#A8A8DC"/><rect x="3" y="8" width="10" height="1" fill="#E8ECF8"/><rect x="3" y="9" width="10" height="1" fill="#2A5EA8"/><rect x="12" y="7" width="1" height="3" fill="#2A5EA8"/><rect x="6" y="10" width="10" height="1" fill="#C6D6F6"/><rect x="6" y="11" width="10" height="1" fill="#F6F0E4"/><rect x="6" y="12" width="10" height="1" fill="#A2A2D4"/><rect x="15" y="10" width="1" height="3" fill="#9C9CD0"/><rect x="6" y="13" width="10" height="1" fill="#C6D6F6"/><rect x="6" y="14" width="10" height="1" fill="#F6F0E4"/><rect x="6" y="15" width="10" height="1" fill="#A2A2D4"/><rect x="15" y="13" width="1" height="3" fill="#9C9CD0"/><path d="M0.8 0.8L6.2 6.2M6.2 0.8L0.8 6.2" stroke="#E0140A" stroke-width="1.8" shape-rendering="geometricPrecision"/><rect x="8" y="8" width="8" height="8" fill="#6E6A20"/><rect x="9" y="9" width="6" height="6" fill="#FFF450"/><path d="M10 11.5L11.5 13L14 10" stroke="#807A20" stroke-width="1.2" fill="none" shape-rendering="geometricPrecision"/></svg>
<div class="a" style="left:170px;top:319px;width:1px;height:17px;background:#C5C1B4"></div>
<div class="a" style="left:171px;top:319px;width:1px;height:17px;background:#FFFFFF"></div>
<svg style="left:175px;top:321px" width="18" height="13" viewBox="0 0 18 13"><path d="M3.5 1Q1 1 1 3.5V9.5Q1 12 3.5 12M14.5 1Q17 1 17 3.5V9.5Q17 12 14.5 12" stroke="#1A2A8A" stroke-width="1.6" fill="none" shape-rendering="geometricPrecision"/><path d="M5 6.5H13" stroke="#1A2A8A" stroke-width="1.4" shape-rendering="geometricPrecision"/><path d="M4 6.5L7 4V9Z M14 6.5L11 4V9Z" fill="#1A2A8A" shape-rendering="geometricPrecision"/></svg>
<svg style="left:198px;top:319px" width="17" height="16" viewBox="0 0 17 16"><circle cx="4.5" cy="7.5" r="3.4" fill="#C8D0F0" stroke="#9C9888" stroke-width="1.6" shape-rendering="geometricPrecision"/><path d="M7.5 10.5L12.5 15" stroke="#2860C0" stroke-width="2" shape-rendering="geometricPrecision"/><text x="8" y="7.5" font-family="Liberation Serif" font-weight="bold" font-size="10" fill="#1A3AA0">N</text></svg>
<div class="a" style="left:221px;top:319px;width:1px;height:17px;background:#C5C1B4"></div>
<div class="a" style="left:222px;top:319px;width:1px;height:17px;background:#FFFFFF"></div>
<svg style="left:227px;top:319px" width="24" height="16" viewBox="0 0 24 16"><rect x="1" y="1" width="9" height="2" fill="#A8A280"/><rect x="4" y="4" width="8" height="2" fill="#A8A280"/><rect x="0" y="7" width="10" height="2" fill="#3A80D8"/><rect x="0" y="10" width="10" height="2" fill="#3A80D8"/><rect x="4" y="13" width="8" height="2" fill="#A8A280"/><path d="M12.5 1Q14 1 14 3V6Q14 8 15.5 8Q14 8 14 10V13Q14 15 12.5 15" stroke="#0A1A8C" stroke-width="1.2" fill="none" shape-rendering="geometricPrecision"/><path d="M18 7h5l-2.5 3z" fill="#000"/></svg>
<svg style="left:257px;top:319px" width="16" height="16" viewBox="0 0 16 16"><rect x="1" y="6" width="9" height="10" fill="#F4F4F4"/><rect x="1" y="8" width="9" height="1" fill="#A8A8A8"/><rect x="1" y="11" width="9" height="1" fill="#A8A8A8"/><rect x="1" y="14" width="9" height="1" fill="#A8A8A8"/><path d="M0.5 0.5H11.5L7.5 5.5V13L4.5 11V5.5Z" fill="#D8D4CC" stroke="#807C70" shape-rendering="geometricPrecision"/><rect x="11" y="0" width="2" height="1" fill="#1A3AA0"/><rect x="11" y="2" width="2" height="1" fill="#1A3AA0"/><rect x="11" y="4" width="2" height="1" fill="#1A3AA0"/><rect x="12" y="5" width="1" height="9" fill="#1A3AA0"/><path d="M9.5 12H15.5L12.5 16Z" fill="#1A3AA0" shape-rendering="geometricPrecision"/></svg>
<svg style="left:280px;top:319px" width="16" height="16" viewBox="0 0 16 16"><rect x="5" y="3" width="11" height="13" fill="#606060"/><rect x="6" y="4" width="9" height="11" fill="#FFFFFF"/><rect x="6" y="4" width="9" height="2" fill="#3C80E0"/><rect x="10" y="7" width="4" height="4" fill="#1A3AA0"/><rect x="11" y="8" width="2" height="2" fill="#FFFFFF"/><rect x="10" y="12" width="3" height="2" fill="#D0D0C0"/><path d="M0.5 0.5H11.5L7.5 5.5V13L4.5 11V5.5Z" fill="#D8D4CC" stroke="#807C70" shape-rendering="geometricPrecision"/></svg>
<svg style="left:301px;top:319px" width="26" height="16" viewBox="0 0 26 16"><rect x="0" y="2" width="9" height="11" fill="#C4C0B6"/><rect x="1" y="3" width="7" height="9" fill="#D4D0C8"/><rect x="3" y="4" width="9" height="11" fill="#BEBAB0"/><rect x="4" y="5" width="7" height="9" fill="#CCC8C0"/><rect x="6" y="6" width="8" height="10" fill="#A8A8D0"/><rect x="7" y="7" width="6" height="8" fill="#D8D6D0"/><path d="M2.5 0.5H13.5L9.5 5.5V11L6.5 9V5.5Z" fill="#C8C4BA" stroke="#A8A49A" shape-rendering="geometricPrecision"/><path d="M20 6h5l-2.5 3z" fill="#8C887E"/></svg>
<svg style="left:333px;top:319px" width="14" height="16" viewBox="0 0 14 16"><path d="M0.5 0.5H11.5L7.5 5.5V13L4.5 11V5.5Z" fill="#D6D2CA" stroke="#ACA89E" shape-rendering="geometricPrecision"/><path d="M8 10L13 15M13 10L8 15" stroke="#A09C92" stroke-width="1.2" shape-rendering="geometricPrecision"/></svg>
<div class="a" style="left:355px;top:319px;width:1px;height:17px;background:#C5C1B4"></div>
<div class="a" style="left:356px;top:319px;width:1px;height:17px;background:#FFFFFF"></div>
<svg style="left:361px;top:319px" width="24" height="16" viewBox="0 0 24 16"><rect x="0" y="0" width="9" height="11" fill="#3C78C8"/><rect x="1" y="1" width="7" height="9" fill="#8CB4E8"/><path d="M6.5 4.5H12.5L15.5 7.5V15.5H6.5Z" fill="#FFFFFF" stroke="#8C8C8C" shape-rendering="geometricPrecision"/><path d="M2 7V9Q2 11 4 11H10" stroke="#2C6CD0" stroke-width="2.4" fill="none" shape-rendering="geometricPrecision"/><path d="M9 7.5L13 11L9 14.5Z" fill="#2C6CD0" shape-rendering="geometricPrecision"/><path d="M19 6h5l-2.5 3z" fill="#000"/></svg>
<div class="a" style="left:390px;top:319px;width:1px;height:17px;background:#C5C1B4"></div>
<div class="a" style="left:391px;top:319px;width:1px;height:17px;background:#FFFFFF"></div>
<div class="t" style="left:396px;top:320px;">Перейти</div>
<svg style="left:444px;top:326px" width="5" height="3"><path d="M0 0h5v1h-1v1h-1v1h-1v-1h-1v-1h-1z" fill="#000"/></svg>
<div class="a" style="left:455px;top:319px;width:1px;height:17px;background:#C5C1B4"></div>
<div class="a" style="left:456px;top:319px;width:1px;height:17px;background:#FFFFFF"></div>
<svg style="left:461px;top:319px" width="16" height="16" viewBox="0 0 16 16"><rect x="1" y="1" width="12" height="15" fill="#C8C4B8"/><rect x="0" y="0" width="12" height="15" fill="#FFFFFF"/><rect x="1" y="1" width="2" height="1" fill="#3C8CE8"/><rect x="4" y="1" width="6" height="1" fill="#D0D0D0"/><rect x="1" y="3" width="2" height="1" fill="#3C8CE8"/><rect x="4" y="3" width="6" height="1" fill="#D0D0D0"/><rect x="1" y="5" width="2" height="1" fill="#3C8CE8"/><rect x="4" y="5" width="6" height="1" fill="#D0D0D0"/><rect x="1" y="7" width="2" height="1" fill="#3C8CE8"/><rect x="4" y="7" width="6" height="1" fill="#D0D0D0"/><rect x="1" y="9" width="2" height="1" fill="#3C8CE8"/><rect x="4" y="9" width="6" height="1" fill="#D0D0D0"/><rect x="1" y="11" width="2" height="1" fill="#3C8CE8"/><rect x="4" y="11" width="6" height="1" fill="#D0D0D0"/><rect x="1" y="13" width="2" height="1" fill="#3C8CE8"/><rect x="4" y="13" width="6" height="1" fill="#D0D0D0"/><path d="M8 14Q4.5 11 4.5 8Q5 5 9 2.5" stroke="#2868D8" stroke-width="1.3" fill="none" shape-rendering="geometricPrecision"/><path d="M6.5 1.5L11.5 0.5L10.5 5.5Z" fill="#0A1A80" shape-rendering="geometricPrecision"/><path d="M11.5 1.5Q15.5 4.5 14.5 9Q13.5 12 11 13.5" stroke="#E81818" stroke-width="1.3" fill="none" shape-rendering="geometricPrecision"/><path d="M8.5 10L9 15L13.5 14Z" fill="#D01010" shape-rendering="geometricPrecision"/></svg>
<div class="a" style="left:482px;top:319px;width:1px;height:17px;background:#C5C1B4"></div>
<div class="a" style="left:483px;top:319px;width:1px;height:17px;background:#FFFFFF"></div>
<svg style="left:488px;top:319px" width="16" height="16" viewBox="0 0 16 16"><path d="M3.5 0.5H12.5L15.5 3.5V12.5L12.5 15.5H3.5L0.5 12.5V3.5Z" fill="#FFFDD0" stroke="#A9A590" shape-rendering="geometricPrecision"/><text x="8" y="12.6" text-anchor="middle" font-family="Liberation Sans" font-weight="bold" font-size="12" fill="#0A1A8C">?</text></svg>
<div class="a" style="left:510px;top:319px;width:1px;height:17px;background:#C5C1B4"></div>
<div class="a" style="left:511px;top:319px;width:1px;height:17px;background:#FFFFFF"></div>
<svg style="left:515px;top:320px" width="18" height="16" viewBox="0 0 18 16"><text x="0" y="7" font-family="Liberation Sans" font-weight="bold" font-size="8.5" fill="#128A12" stroke="#128A12" stroke-width="0.35">Дт</text><text x="5.5" y="13.5" font-family="Liberation Sans" font-weight="bold" font-size="8.5" fill="#F04A2A" stroke="#F04A2A" stroke-width="0.35">Кт</text></svg>
<svg style="left:539px;top:320px" width="18" height="16" viewBox="0 0 18 16"><text x="0" y="7" font-family="Liberation Sans" font-weight="bold" font-size="8.5" fill="#128A12" stroke="#128A12" stroke-width="0.35">Дт</text><text x="5.5" y="13.5" font-family="Liberation Sans" font-weight="bold" font-size="8.5" fill="#F04A2A" stroke="#F04A2A" stroke-width="0.35">Кт</text><text x="12.5" y="5" font-family="Liberation Sans" font-weight="bold" font-size="7" fill="#000" stroke="#000" stroke-width="0.2">Н</text></svg>
<div class="a" style="left:12px;top:348px;width:635px;height:70px;border:1px solid #8E8B7E;background:#fff"></div>
<div class="a" style="left:13px;top:349px;width:620px;height:14px;background:#EAE4D9"></div>
<div class="a" style="left:273px;top:349px;width:91px;height:14px;background:#CAC4B9"></div>
<div class="a" style="left:44px;top:349px;width:1px;height:52px;background:#A7A396"></div>
<div class="a" style="left:64px;top:349px;width:1px;height:52px;background:#A7A396"></div>
<div class="a" style="left:84px;top:349px;width:1px;height:52px;background:#A7A396"></div>
<div class="a" style="left:104px;top:349px;width:1px;height:52px;background:#A7A396"></div>
<div class="a" style="left:125px;top:349px;width:1px;height:52px;background:#A7A396"></div>
<div class="a" style="left:194px;top:349px;width:1px;height:52px;background:#A7A396"></div>
<div class="a" style="left:272px;top:349px;width:1px;height:52px;background:#A7A396"></div>
<div class="a" style="left:364px;top:349px;width:1px;height:52px;background:#A7A396"></div>
<div class="a" style="left:427px;top:349px;width:1px;height:52px;background:#A7A396"></div>
<div class="a" style="left:478px;top:349px;width:1px;height:52px;background:#A7A396"></div>
<div class="a" style="left:544px;top:349px;width:1px;height:52px;background:#A7A396"></div>
<div class="a" style="left:13px;top:363px;width:620px;height:1px;background:#A7A396"></div>
<div class="a" style="left:13px;top:380px;width:620px;height:1px;background:#A7A396"></div>
<div class="a" style="left:13px;top:397px;width:620px;height:1px;background:#A7A396"></div>
<div class="t" style="left:46px;top:350px;">УУ</div>
<div class="t" style="left:66px;top:350px;">БУ</div>
<div class="t" style="left:86px;top:350px;">НУ</div>
<div class="t" style="left:106px;top:350px;">ОУ</div>
<div class="t" style="left:128px;top:350px;">Дата</div>
<svg style="left:182px;top:354px" width="5" height="3"><path d="M0 0h5v1h-1v1h-1v1h-1v-1h-1v-1h-1z" fill="#000"/></svg>
<div class="t" style="left:197px;top:350px;">Номер</div>
<div class="t" style="left:275px;top:350px;">Вид документа</div>
<div class="t" style="left:366px;top:350px;">Контрагент</div>
<div class="t" style="left:430px;top:350px;">Сумма</div>
<div class="t" style="left:480px;top:350px;">Валюта</div>
<div class="t" style="left:546px;top:350px;">Организация</div>
<svg style="left:15px;top:364px" width="17" height="14" viewBox="0 0 17 14"><rect x="0.5" y="3.5" width="15" height="10" rx="1.5" fill="#FFFFFF" stroke="#A8A070" shape-rendering="geometricPrecision"/><rect x="5" y="5" width="3" height="1" fill="#1A2A9A"/><rect x="5" y="8" width="7" height="1" fill="#7078C8"/><rect x="5" y="10" width="7" height="1" fill="#7078C8"/><path d="M8.5 4L11 9L15 0.5" stroke="#1A2A9A" stroke-width="1.5" fill="none" shape-rendering="geometricPrecision"/><path d="M15 0.5L16 -1" stroke="#A0B0E8" stroke-width="1" fill="none" shape-rendering="geometricPrecision"/></svg>
<svg style="left:15px;top:381px" width="17" height="14" viewBox="0 0 17 14"><path d="M4.5 3.5H15.5V13.5H0.5V7.5Z" fill="#FFFFFF" stroke="#A8A070" shape-rendering="geometricPrecision"/><rect x="1" y="7" width="4" height="1" fill="#A8A070"/><rect x="5" y="5" width="3" height="1" fill="#1A2A9A"/><rect x="5" y="8" width="7" height="1" fill="#7078C8"/><rect x="5" y="10" width="7" height="1" fill="#7078C8"/><path d="M8.5 4L11 9L15 0.5" stroke="#1A2A9A" stroke-width="1.5" fill="none" shape-rendering="geometricPrecision"/><path d="M15 0.5L16 -1" stroke="#A0B0E8" stroke-width="1" fill="none" shape-rendering="geometricPrecision"/></svg>
<svg style="left:50px;top:369px" width="8" height="7" viewBox="0 0 8 7"><path d="M0.8 3.5L3 6L7.5 0.8" stroke="#000" stroke-width="1.9" fill="none" shape-rendering="geometricPrecision"/></svg>
<svg style="left:70px;top:369px" width="8" height="7" viewBox="0 0 8 7"><path d="M0.8 3.5L3 6L7.5 0.8" stroke="#000" stroke-width="1.9" fill="none" shape-rendering="geometricPrecision"/></svg>
<svg style="left:90px;top:369px" width="8" height="7" viewBox="0 0 8 7"><path d="M0.8 3.5L3 6L7.5 0.8" stroke="#000" stroke-width="1.9" fill="none" shape-rendering="geometricPrecision"/></svg>
<div class="t" style="left:128px;top:366px;">13.10.2009...</div>
<div class="t" style="left:197px;top:366px;">НФ000000001</div>
<div class="t" style="left:275px;top:366px;">Платежное пор...</div>
<div class="t" style="left:366px;top:366px;">Морской</div>
<div class="t" style="left:428px;top:366px;width:50px;text-align:right;">9 000,00</div>
<div class="t" style="left:480px;top:366px;">грн</div>
<div class="t" style="left:546px;top:366px;">Национальная</div>
<div class="t" style="left:128px;top:383px;">13.10.2009...</div>
<div class="t" style="left:197px;top:383px;">НФ000000001</div>
<div class="t" style="left:366px;top:383px;">Морской</div>
<div class="t" style="left:428px;top:383px;width:50px;text-align:right;">9 000,00</div>
<div class="t" style="left:480px;top:383px;">грн</div>
<div class="t" style="left:546px;top:383px;">Национальная</div>
<div class="a" style="left:272px;top:380px;width:93px;height:18px;background:#000080"></div>
<svg style="left:272px;top:380px" width="93" height="18"><rect x="0.5" y="0.5" width="92" height="17" fill="none" stroke="#F0E8A0" stroke-width="1" stroke-dasharray="1 1"/></svg>
<div class="t" style="left:275px;top:383px;color:#fff">Счет на оплату ...</div>
<div class="a" style="left:633px;top:349px;width:13px;height:52px;background:#FFFBF0"></div>
<div class="a" style="left:632px;top:349px;width:1px;height:52px;background:#A7A396"></div>
<div class="a" style="left:634px;top:350px;width:11px;height:11px;background:#ECE8DE;border:1px solid #CFCBBF"></div>
<svg style="left:0;top:0" width="1" height="1"><path d="M636.0 357.5L639.5 354.0L643.0 357.5" stroke="#000" stroke-width="1.2" fill="none" shape-rendering="geometricPrecision"/></svg>
<div class="a" style="left:634px;top:370px;width:11px;height:11px;background:#ECE8DE;border:1px solid #CFCBBF"></div>
<div class="a" style="left:634px;top:390px;width:11px;height:11px;background:#ECE8DE;border:1px solid #CFCBBF"></div>
<svg style="left:0;top:0" width="1" height="1"><path d="M636.0 394.0L639.5 397.5L643.0 394.0" stroke="#000" stroke-width="1.2" fill="none" shape-rendering="geometricPrecision"/></svg>
<div class="a" style="left:13px;top:401px;width:620px;height:13px;background:#FFFBF0"></div>
<div class="a" style="left:13px;top:401px;width:620px;height:1px;background:#F0ECE2"></div>
<div class="a" style="left:14px;top:403px;width:11px;height:11px;background:#ECE8DE;border:1px solid #CFCBBF"></div>
<svg style="left:0;top:0" width="1" height="1"><path d="M21.0 405.0L17.5 408.5L21.0 412.0" stroke="#000" stroke-width="1.2" fill="none" shape-rendering="geometricPrecision"/></svg>
<div class="a" style="left:26px;top:403px;width:420px;height:11px;background:#ECE8DE;border:1px solid #CFCBBF"></div>
<div class="a" style="left:621px;top:403px;width:11px;height:11px;background:#ECE8DE;border:1px solid #CFCBBF"></div>
<svg style="left:0;top:0" width="1" height="1"><path d="M625.0 405.0L628.5 408.5L625.0 412.0" stroke="#000" stroke-width="1.2" fill="none" shape-rendering="geometricPrecision"/></svg>
<div class="a" style="left:633px;top:401px;width:13px;height:13px;background:#C8C8C8"></div>
<div class="a" style="left:658px;top:292px;width:1px;height:122px;background:#3560B0"></div>
</body></html>
